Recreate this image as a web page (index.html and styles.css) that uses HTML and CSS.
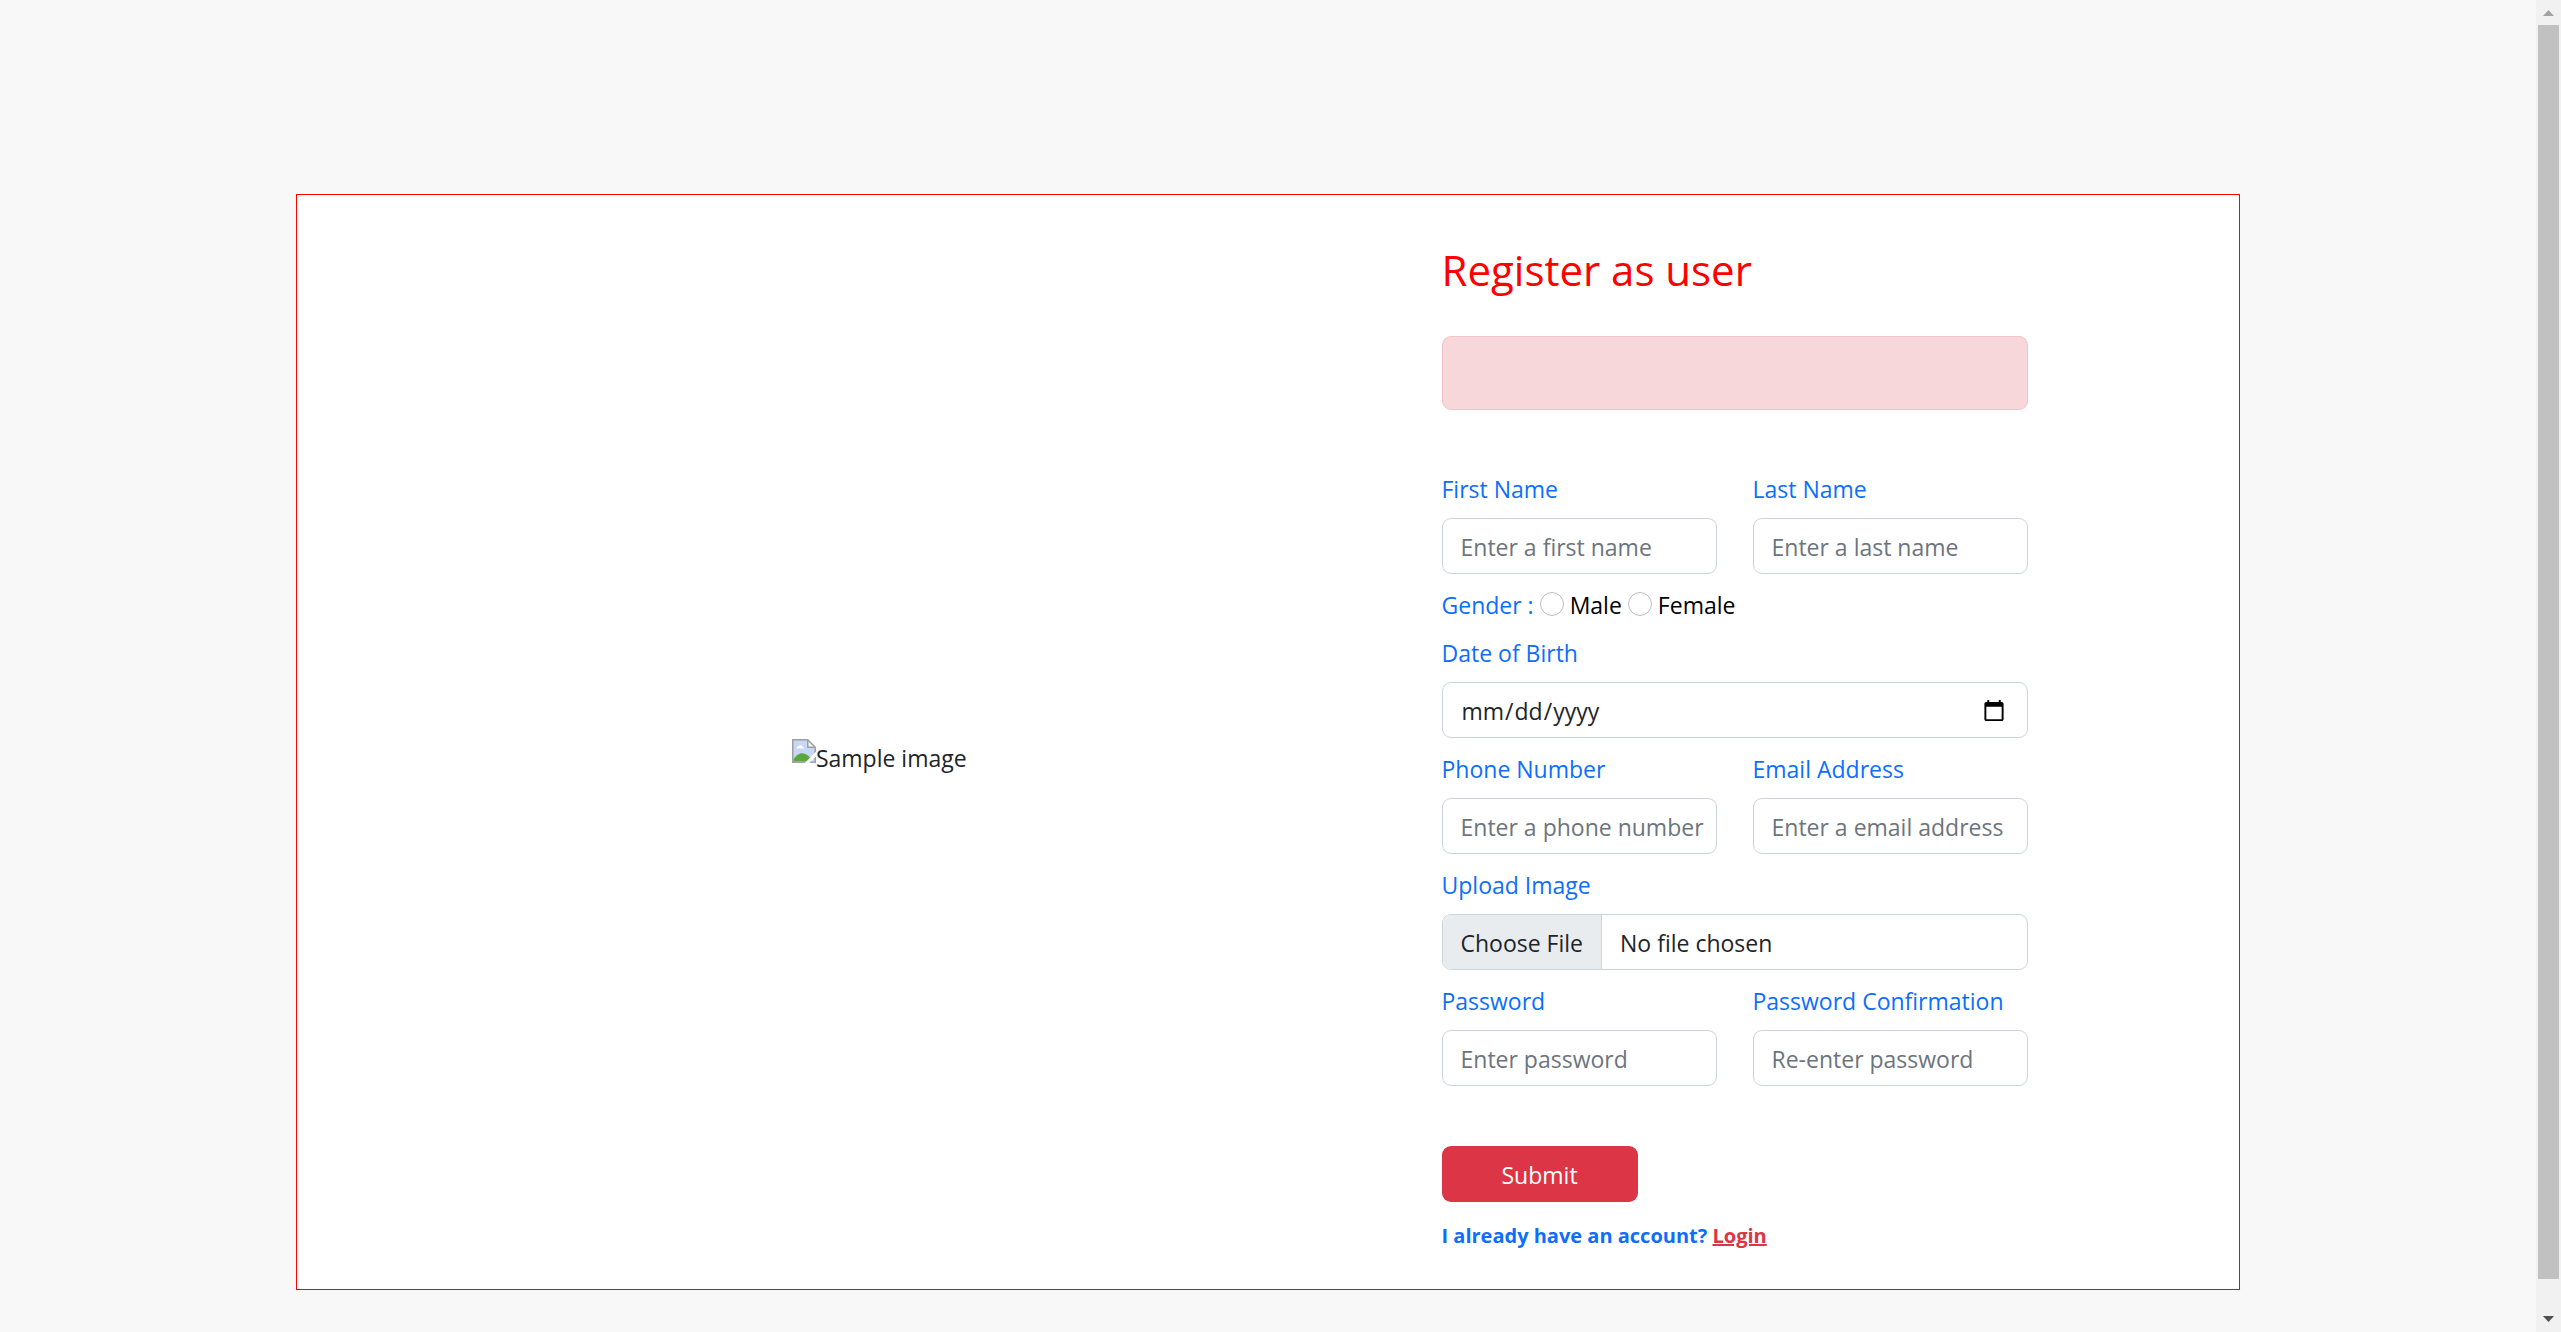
FILE: index.html
```html
<!DOCTYPE html>
<html lang="en">
<head>
  <meta charset="utf-8">
  <meta name="viewport" content="width=device-width, initial-scale=1">
  <title>Register as user</title>
  <link rel="stylesheet" href="styles.css">
</head>
<body>
  <main class="page">
    <section class="card">
      <div class="visual">
        <svg class="broken-icon" viewBox="0 0 16 16" aria-hidden="true">
          <path d="M.5.5h10l5 5v10H.5z" fill="#c6d7f7"/>
          <path d="M1 15v-1.500C3 10.500 5 9.500 7 9.500s4 1.500 5 3V15z" fill="#59a83a"/>
          <path d="M3 6c0-1 .8-1.300 1.400-1.200C4.800 3.800 7 3.800 7 5.200c.8 0 1 .8.800 1.100H3z" fill="#fff"/>
          <path d="M10.500.5v5h5" fill="#f3f3f3" stroke="#a0a0a0"/>
          <path d="M15.500 5.500v10H.5V.5h10l5 5" fill="none" stroke="#a0a0a0"/>
          <path d="M8.500 16 16 8.500v3L11.500 16z" fill="#fff"/>
        </svg>
        <span>Sample image</span>
      </div>
      <form class="form">
        <h1 class="title">Register as user</h1>
        <div class="alert" role="alert"></div>
        <div class="fields">
          <div class="field">
            <label class="label" for="first">First Name</label>
            <input class="control" id="first" type="text" placeholder="Enter a first name">
          </div>
          <div class="field">
            <label class="label" for="last">Last Name</label>
            <input class="control" id="last" type="text" placeholder="Enter a last name">
          </div>
          <div class="gender wide" role="radiogroup" aria-labelledby="gender">
            <span class="label gender-name" id="gender">Gender :</span>
            <input class="radio" id="male" type="radio" name="gender">
            <label class="label" for="male">Male</label>
            <input class="radio" id="female" type="radio" name="gender">
            <label class="label" for="female">Female</label>
          </div>
          <div class="field wide">
            <label class="label" for="birth">Date of Birth</label>
            <input class="control" id="birth" type="date">
          </div>
          <div class="field">
            <label class="label" for="phone">Phone Number</label>
            <input class="control" id="phone" type="tel" placeholder="Enter a phone number">
          </div>
          <div class="field">
            <label class="label" for="email">Email Address</label>
            <input class="control" id="email" type="email" placeholder="Enter a email address">
          </div>
          <div class="field wide">
            <label class="label" for="image">Upload Image</label>
            <input class="control" id="image" type="file">
          </div>
          <div class="field">
            <label class="label" for="password">Password</label>
            <input class="control" id="password" type="password" placeholder="Enter password">
          </div>
          <div class="field">
            <label class="label" for="confirm">Password Confirmation</label>
            <input class="control" id="confirm" type="password" placeholder="Re-enter password">
          </div>
        </div>
        <button class="submit" type="submit">Submit</button>
        <p class="login">I already have an account? <a href="#login">Login</a></p>
      </form>
    </section>
  </main>
  <div class="scrollbar" aria-hidden="true">
    <svg class="arrow" viewBox="0 0 25 25"><path d="M7 16 12.500 10 18 16z" fill="#a3a3a3"/></svg>
    <div class="thumb"></div>
    <svg class="arrow" viewBox="0 0 25 25"><path d="M7 9h11l-5.500 6z" fill="#505050"/></svg>
  </div>
</body>
</html>
```
FILE: styles.css
```css
* {
  box-sizing: border-box;
}

body {
  margin: 0;
  min-height: 100vh;
  display: flex;
  background: #f8f8f8;
  color: #212529;
  font-family: "Open Sans", "Noto Sans", sans-serif;
  font-size: 23px;
  line-height: 36px;
}

.page {
  flex: 1;
  padding: 194px 36px 41px;
}

.card {
  max-width: 1944px;
  margin: 0 auto;
  padding: 48px 38px 35px;
  display: grid;
  grid-template-columns: 7fr 4fr 1fr;
  background: #fff;
  border: 1px solid #f00;
}

.visual {
  display: flex;
  align-items: center;
  justify-content: center;
  padding-top: 18px;
}

.broken-icon {
  width: 24px;
  height: 24px;
  margin-bottom: 14px;
}

.form {
  padding: 0 18px;
}

.title {
  margin: 0 0 39px;
  font-size: 42px;
  font-weight: 400;
  line-height: 54px;
  color: #f00;
}

.alert {
  height: 74px;
  margin-bottom: 60px;
  background: #f8d7da;
  border: 1px solid #f5c2c7;
  border-radius: 9px;
}

.fields {
  display: grid;
  grid-template-columns: 1fr 1fr;
  gap: 12px 36px;
}

.wide {
  grid-column: 1 / -1;
}

.field {
  display: grid;
  gap: 12px;
  min-width: 0;
  color: #0d6efd;
}

.label {
  padding-top: 2px;
  line-height: 34px;
}

.control {
  width: 100%;
  min-width: 0;
  height: 56px;
  margin: 0;
  padding: 10px 12px 8px 18px;
  font: inherit;
  color: #212529;
  background: #fff;
  border: 1px solid #ced4da;
  border-radius: 9px;
  overflow: hidden;
}

.control::placeholder {
  color: #6c757d;
  opacity: 1;
}

.control::-webkit-calendar-picker-indicator {
  width: 24px;
  height: 24px;
  margin-right: 6px;
  padding: 3px;
}

.control::file-selector-button {
  height: 54px;
  margin: -10px 18px -8px -18px;
  padding: 10px 18px 8px;
  font: inherit;
  color: #212529;
  background: #e9ecef;
  border: 0 solid #ced4da;
  border-right-width: 1px;
}

.gender {
  display: flex;
  align-items: center;
  gap: 6px;
  color: #000;
}

.gender-name {
  color: #0d6efd;
}

.radio {
  appearance: none;
  width: 24px;
  height: 24px;
  margin: 0;
  border: 1px solid #bfbfbf;
  border-radius: 50%;
  background: #fff;
}

.submit {
  display: block;
  height: 56px;
  margin-top: 60px;
  padding: 10px 60px 8px;
  font: inherit;
  color: #fff;
  background: #dc3545;
  border: 0;
  border-radius: 9px;
}

.login {
  margin: 16px 0 0;
  font-size: 20px;
  font-weight: 700;
  color: #0d6efd;
}

.login a {
  color: #dc3545;
}

.scrollbar {
  width: 25px;
  height: 100vh;
  display: flex;
  flex-direction: column;
  background: #f1f1f1;
}

.arrow {
  width: 25px;
  height: 25px;
}

.thumb {
  flex: 1;
  margin: 0 2px 28px;
  background: #c1c1c1;
}
```
